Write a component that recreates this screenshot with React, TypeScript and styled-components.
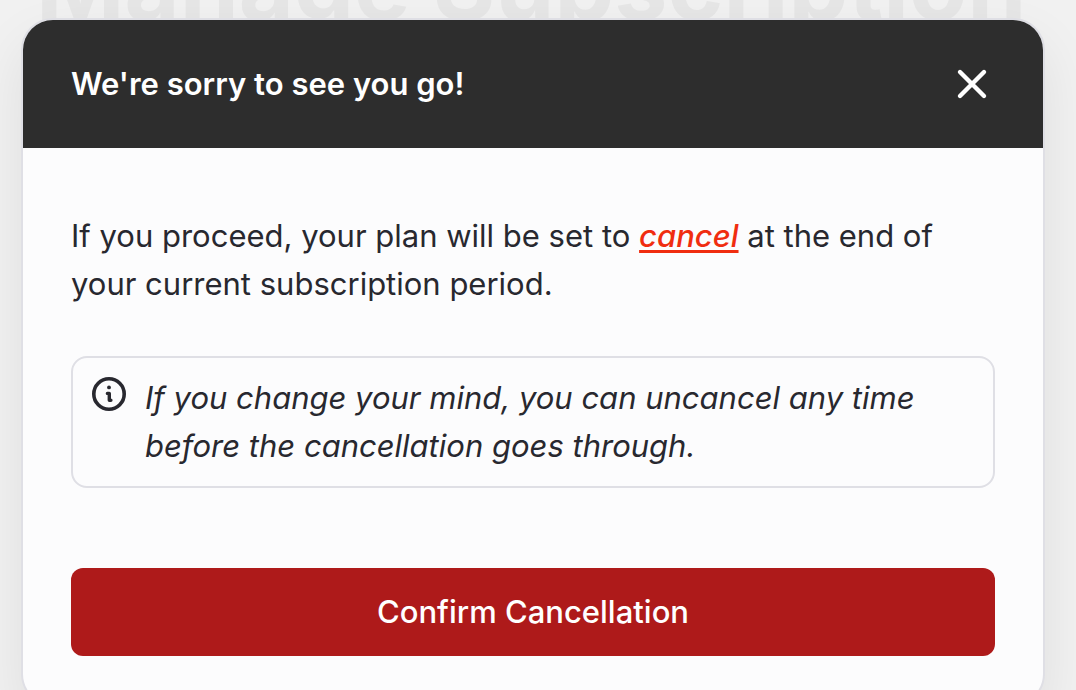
import React from "react";
import styled, { createGlobalStyle } from "styled-components";

const GlobalStyle = createGlobalStyle`
  *, *::before, *::after {
    box-sizing: border-box;
  }
  body {
    margin: 0;
    background: #f1f1f1;
    color: #28282f;
    font-family: Inter, "Open Sans", sans-serif;
    font-size: 31px;
    line-height: 48px;
  }
`;

const Page = styled.div`
  position: relative;
  height: 100vh;
  overflow: hidden;
  padding: 18px 31px 0 21px;
`;

const Backdrop = styled.div`
  position: absolute;
  inset: -74px 0 auto 36px;
`;

const PageTitle = styled.h1`
  margin: 0;
  color: #e6e6e6;
  font-size: 95px;
  font-weight: 700;
  line-height: 120px;
  white-space: nowrap;
`;

const Dialog = styled.section`
  position: relative;
  border: 2px solid #dfdfe5;
  border-radius: 32px;
  background: #fcfcfd;
  overflow: hidden;
  box-shadow: 0 24px 56px rgba(0, 0, 0, 0.08);
`;

const Header = styled.header`
  display: flex;
  align-items: center;
  justify-content: space-between;
  padding: 40px 48px;
  background: #2d2d2d;
  color: #fff;
`;

const Title = styled.h2`
  margin: 0;
  font-size: 31px;
  font-weight: 600;
`;

const CloseButton = styled.button`
  display: flex;
  padding: 0;
  border: 0;
  background: none;
  color: inherit;
  cursor: pointer;
`;

const Body = styled.div`
  display: flex;
  flex-direction: column;
  padding: 64px 48px 48px;
`;

const Message = styled.p`
  margin: 0;
`;

const Cancel = styled.em`
  color: #f02d10;
  font-weight: 500;
  text-decoration: underline;
  text-decoration-thickness: 3px;
  text-underline-offset: 3px;
  text-decoration-skip-ink: none;
`;

const Note = styled.aside`
  display: flex;
  align-items: flex-start;
  gap: 16px;
  margin-top: 48px;
  padding: 16px;
  border: 2px solid #dfdfe5;
  border-radius: 16px;
`;

const NoteIcon = styled.svg`
  flex: none;
`;

const NoteText = styled.p`
  margin: 0;
  font-style: italic;
`;

const ConfirmButton = styled.button`
  margin-top: 80px;
  padding: 20px;
  border: 0;
  border-radius: 12px;
  background: #ae1a1a;
  color: #fff;
  font: inherit;
  font-weight: 500;
  cursor: pointer;
`;

export default function App() {
  return (
    <Page>
      <GlobalStyle />
      <Backdrop>
        <PageTitle>Manage Subscription</PageTitle>
      </Backdrop>
      <Dialog role="dialog" aria-labelledby="dialog-title">
        <Header>
          <Title id="dialog-title">We're sorry to see you go!</Title>
          <CloseButton type="button" aria-label="Close">
            <svg width="46" height="46" viewBox="0 0 46 46" fill="none" stroke="currentColor" strokeWidth="4.4" strokeLinecap="round">
              <path d="M11 11 35 35M35 11 11 35" />
            </svg>
          </CloseButton>
        </Header>
        <Body>
          <Message>
            If you proceed, your plan will be set to <Cancel>cancel</Cancel> at the end of your current subscription
            period.
          </Message>
          <Note>
            <NoteIcon width="40" height="40" viewBox="0 0 40 40" fill="none" stroke="currentColor" aria-hidden="true">
              <circle cx="20" cy="20" r="15.2" strokeWidth="3.6" />
              <path d="M18.4 19.4h1.9v6.9h1.6" strokeWidth="3.4" strokeLinecap="round" strokeLinejoin="round" />
              <circle cx="20" cy="13.4" r="1.9" fill="currentColor" stroke="none" />
            </NoteIcon>
            <NoteText>If you change your mind, you can uncancel any time before the cancellation goes through.</NoteText>
          </Note>
          <ConfirmButton type="button">Confirm Cancellation</ConfirmButton>
        </Body>
      </Dialog>
    </Page>
  );
}
